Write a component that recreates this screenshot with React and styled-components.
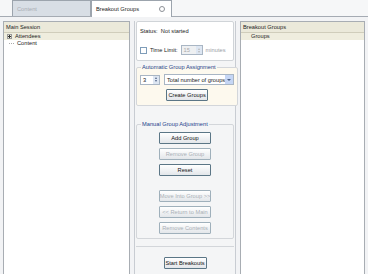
import React from "react";
import styled, { createGlobalStyle } from "styled-components";

const Global = createGlobalStyle`
  html, body { margin: 0; padding: 0; }
  body {
    width: 368px;
    height: 274px;
    overflow: hidden;
    background: #f2f3f5;
    font-family: "Liberation Sans", Arial, sans-serif;
    font-size: 5.7px;
    color: #222;
    white-space: nowrap;
  }
`;

const Page = styled.div`
  width: 368px;
  height: 274px;
  display: flex;
  flex-direction: column;
  overflow: hidden;
`;

const TabBar = styled.div`
  height: 16px;
  flex: none;
  display: flex;
  align-items: stretch;
  border-bottom: 1px solid #a5abb3;
  background: #f6f7f8;
  padding-left: 12px;
`;

const Tab = styled.div`
  width: ${(p) => p.width}px;
  display: flex;
  align-items: center;
  justify-content: space-between;
  padding: 0 4px;
  box-sizing: border-box;
  border: 1px solid #9ca4ad;
  border-bottom: none;
  margin-bottom: ${(p) => (p.active ? "-1px" : "0")};
  background: ${(p) => (p.active ? "#ffffff" : "#d8dee5")};
  color: ${(p) => (p.active ? "#222" : "#a8adb3")};
`;

const Gear = styled.span`
  width: 6px;
  height: 6px;
  margin-right: 2px;
  border-radius: 50%;
  border: 1.5px solid #8c9096;
  box-sizing: border-box;
`;

const Body = styled.div`
  flex: 1;
  display: grid;
  grid-template-columns: 127px 102px 1fr;
  gap: 4px;
  padding: 4px 3px 0 3px;
  min-height: 0;
`;

const Panel = styled.div`
  background: #fff;
  border: 1px solid #a8adb3;
  border-bottom: none;
`;

const PanelHeader = styled.div`
  height: 10px;
  line-height: 10px;
  padding-left: 2px;
  background: #ebe9da;
  border-bottom: 1px solid #d0cdbb;
`;

const TreeRow = styled.div`
  height: 7px;
  line-height: 7px;
  display: flex;
  align-items: center;
  padding-left: ${(p) => p.indent}px;
  gap: 3px;
  background: ${(p) => (p.selected ? "#efedde" : "transparent")};
`;

const Expander = styled.span`
  width: 5px;
  height: 5px;
  border: 1px solid #999;
  box-sizing: border-box;
  position: relative;
  &::before {
    content: "";
    position: absolute;
    left: 0;
    top: 1px;
    width: 3px;
    height: 1px;
    background: #333;
  }
  &::after {
    content: "";
    position: absolute;
    left: 1px;
    top: 0;
    width: 1px;
    height: 3px;
    background: #333;
  }
`;

const TreeLine = styled.span`
  width: 5px;
  border-top: 1px dotted #aaa;
`;

const Middle = styled.div`
  display: flex;
  flex-direction: column;
  border: 1px solid #c8ccd2;
  border-bottom: none;
  border-top: none;
  background: #f4f5f6;
  padding: 0 1px;
  min-height: 0;
`;

const StatusBox = styled.div`
  height: 40px;
  box-sizing: border-box;
  background: #fff;
  border: 1px solid #d0d4d8;
  border-radius: 2px;
  padding: 6px 3px 0;
  display: flex;
  flex-direction: column;
  gap: 11px;
`;

const Row = styled.div`
  display: flex;
  align-items: center;
  gap: ${(p) => p.gap || 3}px;
  align-self: stretch;
`;

const Check = styled.span`
  width: 7px;
  height: 7px;
  border: 1px solid #7f9db9;
  background: #fff;
  box-sizing: border-box;
`;

const Spinner = styled.div`
  width: ${(p) => p.width}px;
  height: 10px;
  flex: none;
  border: 1px solid #a9b6c4;
  background: ${(p) => (p.disabled ? "#eef0f2" : "#fff")};
  color: ${(p) => (p.disabled ? "#aaa" : "#222")};
  display: flex;
  align-items: center;
  justify-content: space-between;
  padding-left: 2px;
  box-sizing: border-box;
`;

const SpinArrows = styled.span`
  width: 6px;
  height: 8px;
  display: flex;
  flex-direction: column;
  align-items: center;
  justify-content: center;
  gap: 1px;
  background: #dde6f2;
  &::before, &::after {
    content: "";
    border-left: 1.5px solid transparent;
    border-right: 1.5px solid transparent;
  }
  &::before { border-bottom: 2px solid ${(p) => (p.muted ? "#bbb" : "#4d6185")}; }
  &::after { border-top: 2px solid ${(p) => (p.muted ? "#bbb" : "#4d6185")}; }
`;

const Muted = styled.span`
  color: #9a9ea4;
`;

const Fieldset = styled.fieldset`
  margin: ${(p) => p.top || 0}px 0 0;
  padding: ${(p) => p.pad || 2}px 3px ${(p) => p.bottom || 4}px;
  border: 1px solid #d3d6da;
  border-radius: 2px;
  background: ${(p) => p.tint || "#f4f5f6"};
  display: flex;
  flex-direction: column;
  gap: ${(p) => p.gap || 3}px;
  align-items: center;
`;

const Legend = styled.legend`
  padding: 0 1px;
  margin-left: 1px;
  color: #1c3f8c;
`;

const Select = styled.div`
  flex: 1;
  height: 11px;
  border: 1px solid #a9b6c4;
  background: #fff;
  display: flex;
  align-items: center;
  justify-content: space-between;
  padding-left: 2px;
  box-sizing: border-box;
`;

const DropArrow = styled.span`
  width: 8px;
  height: 9px;
  background: #c5d6f5;
  display: flex;
  align-items: center;
  justify-content: center;
  &::after {
    content: "";
    border-left: 2px solid transparent;
    border-right: 2px solid transparent;
    border-top: 2.5px solid #4d6185;
  }
`;

const Button = styled.div`
  width: ${(p) => p.width || 52}px;
  height: 12px;
  flex: none;
  box-sizing: border-box;
  border: 1px solid ${(p) => (p.disabled ? "#9fb0bb" : "#5b7686")};
  border-radius: 1px;
  background: linear-gradient(#ffffff, #e3e6ea);
  color: ${(p) => (p.disabled ? "#aab0b6" : "#111")};
  display: flex;
  align-items: center;
  justify-content: center;
  margin-top: ${(p) => p.space || 0}px;
`;

const Footer = styled.div`
  margin-top: 7px;
  flex: 1;
  border-top: 1px solid #d3d6da;
  display: flex;
  justify-content: center;
  align-items: flex-start;
  padding-top: 10px;
`;

export default function App() {
  return (
    <Page>
      <Global />
      <TabBar>
        <Tab width={79}>Content</Tab>
        <Tab width={81} active>
          Breakout Groups <Gear />
        </Tab>
      </TabBar>
      <Body>
        <Panel>
          <PanelHeader>Main Session</PanelHeader>
          <TreeRow indent={3} selected>
            <Expander />
            Attendees
          </TreeRow>
          <TreeRow indent={5}>
            <TreeLine />
            Content
          </TreeRow>
        </Panel>
        <Middle>
          <StatusBox>
            <span>Status:&nbsp; Not started</span>
            <Row>
              <Check />
              <span>Time Limit:</span>
              <Spinner width={22} disabled>
                15 <SpinArrows muted />
              </Spinner>
              <Muted>minutes</Muted>
            </Row>
          </StatusBox>
          <Fieldset tint="#fdf9ee" top={3} pad={4} gap={4}>
            <Legend>Automatic Group Assignment</Legend>
            <Row gap={4}>
              <Spinner width={20}>
                3 <SpinArrows />
              </Spinner>
              <Select>
                Total number of groups <DropArrow />
              </Select>
            </Row>
            <Button width={42}>Create Groups</Button>
          </Fieldset>
          <Fieldset gap={4} top={15} pad={5} bottom={4}>
            <Legend>Manual Group Adjustment</Legend>
            <Button>Add Group</Button>
            <Button disabled>Remove Group</Button>
            <Button>Reset</Button>
            <Button disabled space={10}>Move Into Group &gt;&gt;</Button>
            <Button disabled>&lt;&lt; Return to Main</Button>
            <Button disabled>Remove Contents</Button>
          </Fieldset>
          <Footer>
            <Button width={43}>Start Breakouts</Button>
          </Footer>
        </Middle>
        <Panel>
          <PanelHeader>Breakout Groups</PanelHeader>
          <TreeRow indent={10} selected>
            Groups
          </TreeRow>
        </Panel>
      </Body>
    </Page>
  );
}
